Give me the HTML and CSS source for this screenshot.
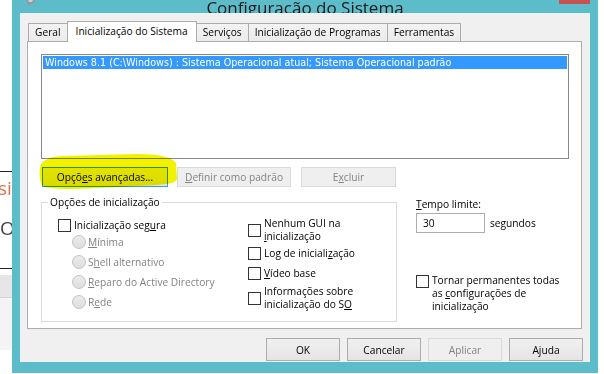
FILE: index.html
```html
<!DOCTYPE html>
<html lang="pt-BR">
<head>
    <meta charset="UTF-8">
    <meta name="viewport" content="width=device-width, initial-scale=1.0">
    <title>Configuração do Sistema</title>
    <link rel="stylesheet" href="styles.css">
</head>
<body>
    <div class="behind">
        <div class="behind-top"></div>
        <div class="behind-doc">
            <div class="behind-word orange">si</div>
            <div class="behind-word">O</div>
        </div>
        <div class="behind-bar"></div>
        <div class="behind-panel"></div>
    </div>

    <div class="window">
        <div class="titlebar">
            <div class="title-left">
                <svg class="app-icon" width="11" height="6" viewBox="0 0 11 6">
                    <path d="M1 0 L10 0 L9 3 L6 4 L5 6 L3 5 L2 3 Z" fill="#8f9aa6"/>
                    <path d="M3 0 L8 0 L7 2 L4 2 Z" fill="#c9d2dc"/>
                </svg>
            </div>
            <div class="title">Configuração do Sistema</div>
            <div class="title-right"><div class="close"></div></div>
        </div>

        <div class="dialog">
            <div class="tabs">
                <div class="tab">Geral</div>
                <div class="tab active">Inicialização do Sistema</div>
                <div class="tab">Serviços</div>
                <div class="tab">Inicialização de Programas</div>
                <div class="tab">Ferramentas</div>
            </div>

            <div class="panel">
                <div class="listbox">
                    <div class="list-item selected">Windows 8.1 (C:\Windows) : Sistema Operacional atual; Sistema Operacional padrão</div>
                </div>

                <div class="btn-row">
                    <div class="marked">
                        <button class="btn focused wide">Opçõ<u>e</u>s avançadas...</button>
                        <svg class="marker" width="141" height="38" viewBox="0 0 141 38">
                            <path d="M3 14 C5 7 14 3 26 3 L100 1 C121 1 135 4 139 10 L140 26 C139 30 131 31 120 32 L60 35 C30 37 12 36 6 33 C3 30 2 22 3 14 Z" fill="#f2f200"/>
                        </svg>
                    </div>
                    <button class="btn disabled default"><u>D</u>efinir como padrão</button>
                    <button class="btn disabled remove">E<u>x</u>cluir</button>
                </div>

                <div class="lower">
                    <fieldset class="group">
                        <legend>Opções de inicialização</legend>
                        <div class="group-cols">
                            <div class="col-left">
                                <div class="check first">
                                    <span class="box"></span>
                                    <span>Inicialização seg<u>u</u>ra</span>
                                </div>
                                <div class="radio"><span class="dot"></span><span><u>M</u>ínima</span></div>
                                <div class="radio"><span class="dot"></span><span>S<u>h</u>ell alternativo</span></div>
                                <div class="radio"><span class="dot"></span><span><u>R</u>eparo do Active Directory</span></div>
                                <div class="radio"><span class="dot"></span><span>R<u>e</u>de</span></div>
                            </div>
                            <div class="col-right">
                                <div class="check">
                                    <span class="box"></span>
                                    <span class="wrap">Nenhum GUI na <u>i</u>nicialização</span>
                                </div>
                                <div class="check log">
                                    <span class="box"></span>
                                    <span>Log de iniciali<u>z</u>ação</span>
                                </div>
                                <div class="check video">
                                    <span class="box"></span>
                                    <span><u>V</u>ídeo base</span>
                                </div>
                                <div class="check info">
                                    <span class="box"></span>
                                    <span class="wrap">Informações sobre inicialização do S<u>O</u></span>
                                </div>
                            </div>
                        </div>
                    </fieldset>

                    <div class="timeout">
                        <div class="timeout-label"><u>T</u>empo limite:</div>
                        <div class="timeout-row">
                            <div class="textbox">30</div>
                            <span>segundos</span>
                        </div>
                        <div class="check permanent">
                            <span class="box"></span>
                            <span class="wrap">Tornar permanentes todas as <u>c</u>onfigurações de inicialização</span>
                        </div>
                    </div>
                </div>
            </div>

            <div class="footer">
                <button class="btn">OK</button>
                <button class="btn">Cancelar</button>
                <button class="btn disabled">Aplicar</button>
                <button class="btn">Ajuda</button>
            </div>
        </div>
    </div>
</body>
</html>
```

FILE: styles.css
```css
* {
    box-sizing: border-box;
}
body {
    margin: 0;
    width: 604px;
    height: 374px;
    overflow: hidden;
    display: flex;
    background: #fff;
    font-family: "Segoe UI", "Open Sans", sans-serif;
    font-size: 10.2px;
    color: #000;
}
u {
    text-decoration: underline;
    text-underline-offset: 1px;
}

/* window that sits behind the dialog */
.behind {
    width: 12px;
    flex-shrink: 0;
    display: flex;
    flex-direction: column;
    overflow: hidden;
}
.behind-top {
    height: 172px;
    border-bottom: 1px solid #222;
}
.behind-doc {
    height: 97px;
    border-bottom: 1px solid #222;
    padding-top: 6px;
}
.behind-word {
    font-size: 19px;
    line-height: 20px;
    color: #444;
    white-space: nowrap;
}
.behind-word.orange {
    color: #e27150;
    margin-left: -2px;
    margin-bottom: 20px;
}
.behind-bar {
    margin-top: 6px;
    height: 23px;
    background: #e6e6e6;
    border-bottom: 1px solid #d6d6d6;
}
.behind-panel {
    height: 52px;
    background: #f4f4f4;
}

/* dialog window */
.window {
    width: 586px;
    height: 373px;
    flex-shrink: 0;
    background: #5dbcca;
    display: flex;
    flex-direction: column;
}
.titlebar {
    height: 13px;
    overflow: hidden;
    display: grid;
    grid-template-columns: 1fr auto 1fr;
}
.title-left {
    padding-left: 13px;
}
.app-icon {
    display: block;
}
.title {
    align-self: end;
    font-size: 17px;
    line-height: 16px;
    margin-bottom: -2px;
    color: #1b1b1b;
    white-space: nowrap;
}
.title-right {
    display: flex;
    justify-content: flex-end;
    padding-right: 8px;
}
.close {
    width: 31px;
    height: 4px;
    background: #c75050;
}

.dialog {
    margin: 0 8px;
    height: 349px;
    background: #f0f0f0;
    padding: 8px 8px 0 7px;
    display: flex;
    flex-direction: column;
}

/* tabs */
.tabs {
    display: flex;
    align-items: flex-end;
    height: 20px;
    padding-left: 1px;
}
.tab {
    height: 18px;
    padding: 0 6px;
    line-height: 17px;
    border: 1px solid #acacac;
    border-bottom: none;
    background: linear-gradient(#f3f3f3, #ebebeb);
    white-space: nowrap;
}
.tab + .tab {
    margin-left: -1px;
}
.tab.active {
    position: relative;
    z-index: 1;
    height: 21px;
    margin-bottom: -1px;
    padding: 0 8px;
    line-height: 18px;
    background: #fff;
}

.panel {
    height: 288px;
    border: 1px solid #adadad;
    background: #fff;
    padding: 12px 12px 0 13px;
}

.listbox {
    height: 105px;
    border: 1px solid #828790;
    padding: 1px;
}
.list-item {
    height: 13px;
    line-height: 13px;
    padding-left: 2px;
    font-family: "DejaVu Sans", sans-serif;
    font-size: 9.6px;
    white-space: nowrap;
}
.list-item.selected {
    background: #3399ff;
    color: #fff;
}

/* buttons */
.btn {
    font-family: inherit;
    font-size: inherit;
    color: #000;
    height: 23px;
    width: 74px;
    padding: 0;
    border: 1px solid #acacac;
    background: linear-gradient(#f0f0f0, #e5e5e5);
    white-space: nowrap;
}
.btn.disabled {
    color: #838383;
    border-color: #d9d9d9;
    background: #efefef;
}
.btn.focused {
    border-color: #3399ff;
}

.btn-row {
    display: flex;
    margin-top: 8px;
}
.btn-row .btn {
    height: 20px;
}
.marked {
    position: relative;
    margin-left: 1px;
}
.btn.wide {
    width: 126px;
    display: block;
}
.marker {
    position: absolute;
    left: -5px;
    top: -14px;
    mix-blend-mode: multiply;
    pointer-events: none;
}
.btn.default {
    width: 114px;
    margin-left: 9px;
}
.btn.remove {
    width: 95px;
    margin-left: 10px;
}

/* lower part */
.lower {
    display: flex;
    align-items: flex-start;
    margin-top: 8px;
}
.group {
    margin: 0;
    padding: 0;
    width: 356px;
    min-width: 0;
    border: 1px solid #dcdcdc;
}
.group legend {
    margin-left: 6px;
    padding: 0 2px;
    line-height: 14px;
}
.group-cols {
    display: flex;
    padding: 9px 0 9px 16px;
}
.col-left {
    width: 190px;
    display: flex;
    flex-direction: column;
}
.col-right {
    display: flex;
    flex-direction: column;
    margin-top: -1px;
}

.check {
    display: flex;
    align-items: center;
    gap: 3px;
    line-height: 13px;
}
.check.first {
    height: 14px;
}
.box {
    width: 13px;
    height: 13px;
    flex-shrink: 0;
    border: 1px solid #333;
    background: #fff;
}
.wrap {
    width: 104px;
}
.check.log {
    margin-top: 4px;
}
.check.video {
    margin-top: 7px;
}
.check.info {
    margin-top: 5px;
}

.radio {
    display: flex;
    align-items: center;
    gap: 2px;
    height: 20px;
    margin-left: 14px;
    color: #838383;
}
.dot {
    width: 14px;
    height: 14px;
    border-radius: 50%;
    border: 1px solid #c3c3c3;
    background: linear-gradient(#ececec, #dedede);
}

.timeout {
    margin-left: 19px;
    display: flex;
    flex-direction: column;
}
.timeout-label {
    margin-top: 2px;
    line-height: 14px;
}
.timeout-row {
    display: flex;
    align-items: center;
    gap: 5px;
    margin-top: 2px;
}
.textbox {
    width: 69px;
    height: 20px;
    border: 1px solid #abadb3;
    padding-left: 6px;
    line-height: 18px;
}
.check.permanent {
    align-items: flex-start;
    margin-top: 41px;
}
.check.permanent .box {
    margin-top: 1px;
}
.check.permanent .wrap {
    width: 132px;
}

.footer {
    display: flex;
    justify-content: flex-end;
    gap: 7px;
    margin-top: 9px;
    margin-right: -1px;
}
```
